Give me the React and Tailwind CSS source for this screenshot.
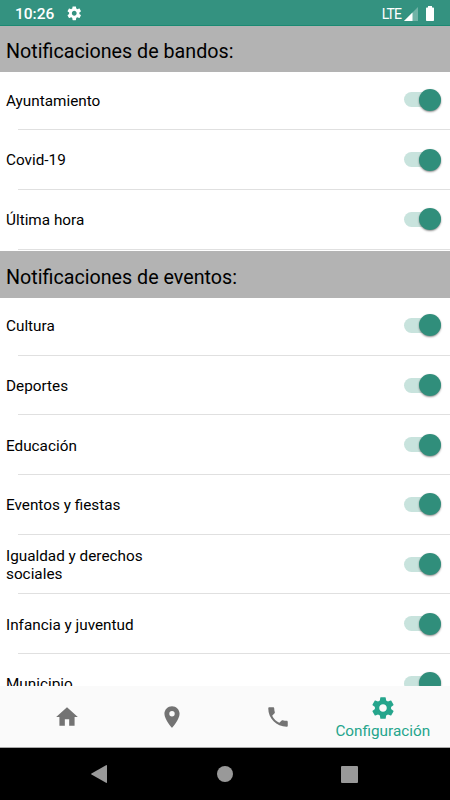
import { MdHome, MdPlace, MdPhone } from 'react-icons/md'

const sections = [
  {
    title: 'Notificaciones de bandos:',
    items: ['Ayuntamiento', 'Covid-19', 'Última hora'],
  },
  {
    title: 'Notificaciones de eventos:',
    items: [
      'Cultura',
      'Deportes',
      'Educación',
      'Eventos y fiestas',
      'Igualdad y derechos sociales',
      'Infancia y juventud',
      'Municipio',
    ],
  },
]

function GearIcon({ className }) {
  return (
    <svg viewBox="0 0 24 24" fill="currentColor" className={className}>
      <path d="M19.43 12.98c.04-.32.07-.64.07-.98s-.03-.66-.07-.98l2.11-1.65c.19-.15.24-.42.12-.64l-2-3.46c-.12-.22-.39-.3-.61-.22l-2.49 1c-.52-.4-1.08-.73-1.69-.98l-.38-2.65C14.46 2.18 14.25 2 14 2h-4c-.25 0-.46.18-.49.42l-.38 2.65c-.61.25-1.17.59-1.69.98l-2.49-1c-.23-.09-.49 0-.61.22l-2 3.46c-.13.22-.07.49.12.64l2.11 1.65c-.04.32-.07.65-.07.98s.03.66.07.98l-2.11 1.65c-.19.15-.24.42-.12.64l2 3.46c.12.22.39.3.61.22l2.49-1c.52.4 1.08.73 1.69.98l.38 2.65c.03.24.24.42.49.42h4c.25 0 .46-.18.49-.42l.38-2.65c.61-.25 1.17-.59 1.69-.98l2.49 1c.23.09.49 0 .61-.22l2-3.46c.12-.22.07-.49-.12-.64l-2.11-1.65zM12 15.5c-1.93 0-3.5-1.57-3.5-3.5s1.57-3.5 3.5-3.5 3.5 1.57 3.5 3.5-1.57 3.5-3.5 3.5z" />
    </svg>
  )
}

function StatusBar() {
  return (
    <header className="flex h-[26px] shrink-0 items-center border-b border-[#1b8a73] bg-[#349280] pt-[3px] pl-[15px] text-white">
      <span className="pt-px text-[15.5px] leading-none font-medium">10:26</span>
      <GearIcon className="mb-0.5 ml-3 h-[16.5px] w-[16.5px]" />
      <div className="ml-auto flex items-center pr-4">
        <span className="text-[14px] leading-none tracking-[-0.9px]">LTE</span>
        <svg viewBox="0 0 14 14" className="ml-[3px] h-3.5 w-3.5">
          <path d="M14 0V14H0Z" fill="#fff" fillOpacity="0.3" />
          <path d="M8.5 5.5V14H0Z" fill="#fff" />
        </svg>
        <svg viewBox="0 0 8 15" className="mb-px ml-2 h-[15px] w-2">
          <path d="M2 0h4v1.5H7.2q.8 0 .8.8V14.2q0 .8-.8.8H.8Q0 15 0 14.2V2.3Q0 1.5.8 1.5H2Z" fill="#fff" />
        </svg>
      </div>
    </header>
  )
}

function Toggle() {
  return (
    <div className="flex h-[15px] w-[36.5px] items-center justify-end rounded-full bg-[#c8e3dd]">
      <div className="h-[22px] w-[22px] shrink-0 rounded-full bg-[#308e7b] shadow-[0_1px_2px_rgba(0,0,0,0.45)]" />
    </div>
  )
}

function Row({ label }) {
  return (
    <li className="h-[59.7px]">
      <div className="flex h-[56.9px] items-center justify-between pr-[9.4px] pb-[1.5px] pl-1.5">
        <span className="w-[165px] pt-[1.6px] text-[15.3px] leading-[18px]">{label}</span>
        <Toggle />
      </div>
      <div className="ml-[17.5px] h-px bg-[#e0e0e0]" />
    </li>
  )
}

function Section({ title, items }) {
  return (
    <section>
      <h2 className="flex h-[46.3px] items-center bg-[#b3b3b3] pt-[5.6px] pl-1.5 text-[19.7px]">{title}</h2>
      <ul>
        {items.map(item => (
          <Row key={item} label={item} />
        ))}
      </ul>
    </section>
  )
}

function TabBar() {
  return (
    <nav className="flex h-[62px] shrink-0 items-center border-b border-[#a8a8a8] bg-[#fafafa] px-[14px] text-[#737373]">
      <div className="flex w-[105.5px] justify-center">
        <MdHome className="h-[26px] w-[26px]" />
      </div>
      <div className="flex w-[105.5px] justify-center">
        <MdPlace className="h-[26px] w-[26px]" />
      </div>
      <div className="flex w-[105.5px] justify-center">
        <MdPhone className="h-[26px] w-[26px]" />
      </div>
      <div className="flex w-[105.5px] flex-col items-center pt-[3px] text-[#25a58c]">
        <GearIcon className="h-[26px] w-[26px]" />
        <span className="pr-px text-[15.3px] leading-[20px]">Configuración</span>
      </div>
    </nav>
  )
}

function SystemBar() {
  return (
    <footer className="flex h-[52px] shrink-0 items-center justify-between bg-black pr-[92px] pl-[91px] text-[#999]">
      <svg viewBox="0 0 16 18" fill="currentColor" className="h-[18px] w-4">
        <path d="M15 .2q1-.5 1 .6V17.2q0 1.1-1 .6L.5 9.500Q-.3 9 .5 8.5Z" />
      </svg>
      <div className="ml-px h-4 w-4 rounded-full bg-[#999]" />
      <div className="h-[17px] w-[17px] rounded-[1px] bg-[#999]" />
    </footer>
  )
}

export default function App() {
  return (
    <div className="flex h-screen flex-col overflow-hidden bg-white font-[Roboto,sans-serif] text-black">
      <StatusBar />
      <main className="min-h-0 flex-1 overflow-hidden">
        {sections.map(section => (
          <Section key={section.title} title={section.title} items={section.items} />
        ))}
      </main>
      <TabBar />
      <SystemBar />
    </div>
  )
}
